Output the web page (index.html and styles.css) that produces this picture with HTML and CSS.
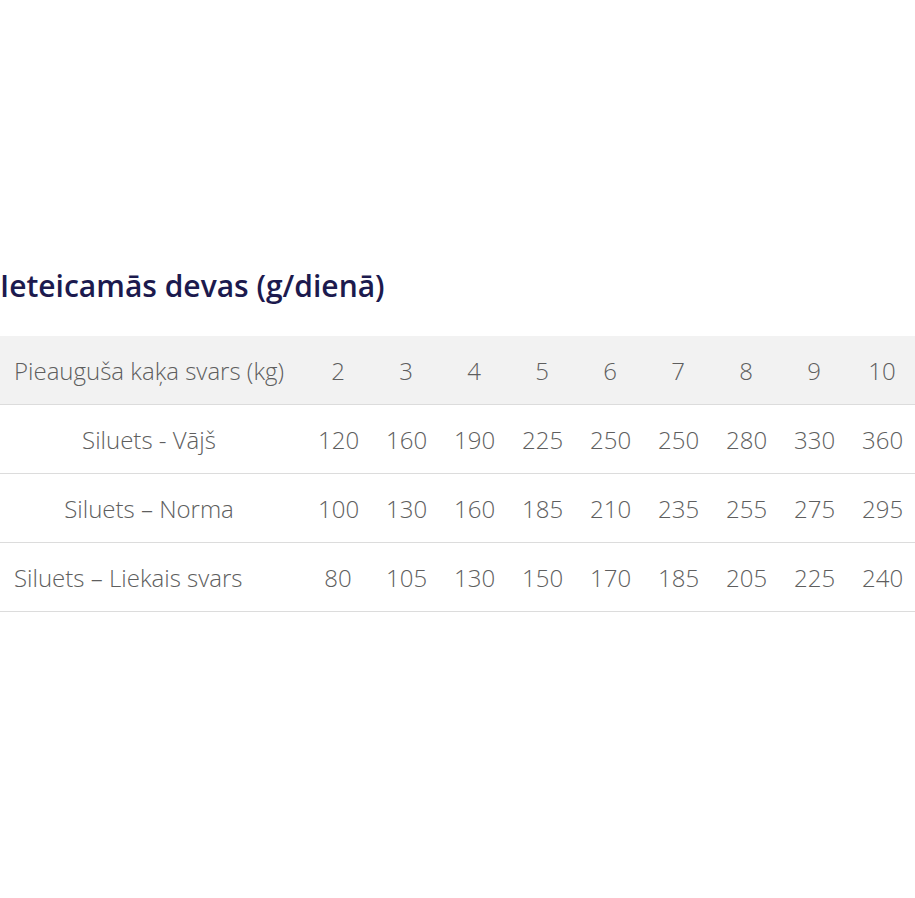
FILE: index.html
```html
<!DOCTYPE html>
<html lang="lv">
<head>
<meta charset="utf-8">
<link rel="stylesheet" href="styles.css">
</head>
<body>
<main class="page">
  <h2 class="title">Ieteicamās devas (g/dienā)</h2>
  <table class="dose-table">
    <thead>
      <tr>
        <th class="label">Pieauguša kaķa svars (kg)</th>
        <th>2</th><th>3</th><th>4</th><th>5</th><th>6</th><th>7</th><th>8</th><th>9</th><th>10</th>
      </tr>
    </thead>
    <tbody>
      <tr>
        <td class="label">Siluets - Vājš</td>
        <td>120</td><td>160</td><td>190</td><td>225</td><td>250</td><td>250</td><td>280</td><td>330</td><td>360</td>
      </tr>
      <tr>
        <td class="label">Siluets – Norma</td>
        <td>100</td><td>130</td><td>160</td><td>185</td><td>210</td><td>235</td><td>255</td><td>275</td><td>295</td>
      </tr>
      <tr>
        <td class="label label-left">Siluets – Liekais svars</td>
        <td>80</td><td>105</td><td>130</td><td>150</td><td>170</td><td>185</td><td>205</td><td>225</td><td>240</td>
      </tr>
    </tbody>
  </table>
</main>
</body>
</html>
```

FILE: styles.css
```css
html, body {
  margin: 0;
  padding: 0;
  background: #ffffff;
}

.page {
  padding-top: 266px;
  overflow: hidden;
  font-family: "Open Sans", "Liberation Sans", sans-serif;
}

.title {
  margin: 0 0 30px 0;
  font-size: 30px;
  line-height: 40px;
  font-weight: 600;
  color: #1c1a4e;
}

.dose-table {
  width: 916px;
  table-layout: fixed;
  border-collapse: collapse;
  font-size: 24px;
  font-weight: 300;
  color: #5e5e5e;
}

.dose-table th,
.dose-table td {
  width: 40px;
  font-weight: 300;
  text-align: center;
  padding: 0 14px;
  height: 68px;
  border-bottom: 1px solid #dcdcdc;
  white-space: nowrap;
}

.dose-table .label {
  width: 270px;
  padding: 0 20px 0 14px;
}

.dose-table .label-left {
  text-align: left;
}

.dose-table thead tr {
  background: #f2f2f2;
}
```
